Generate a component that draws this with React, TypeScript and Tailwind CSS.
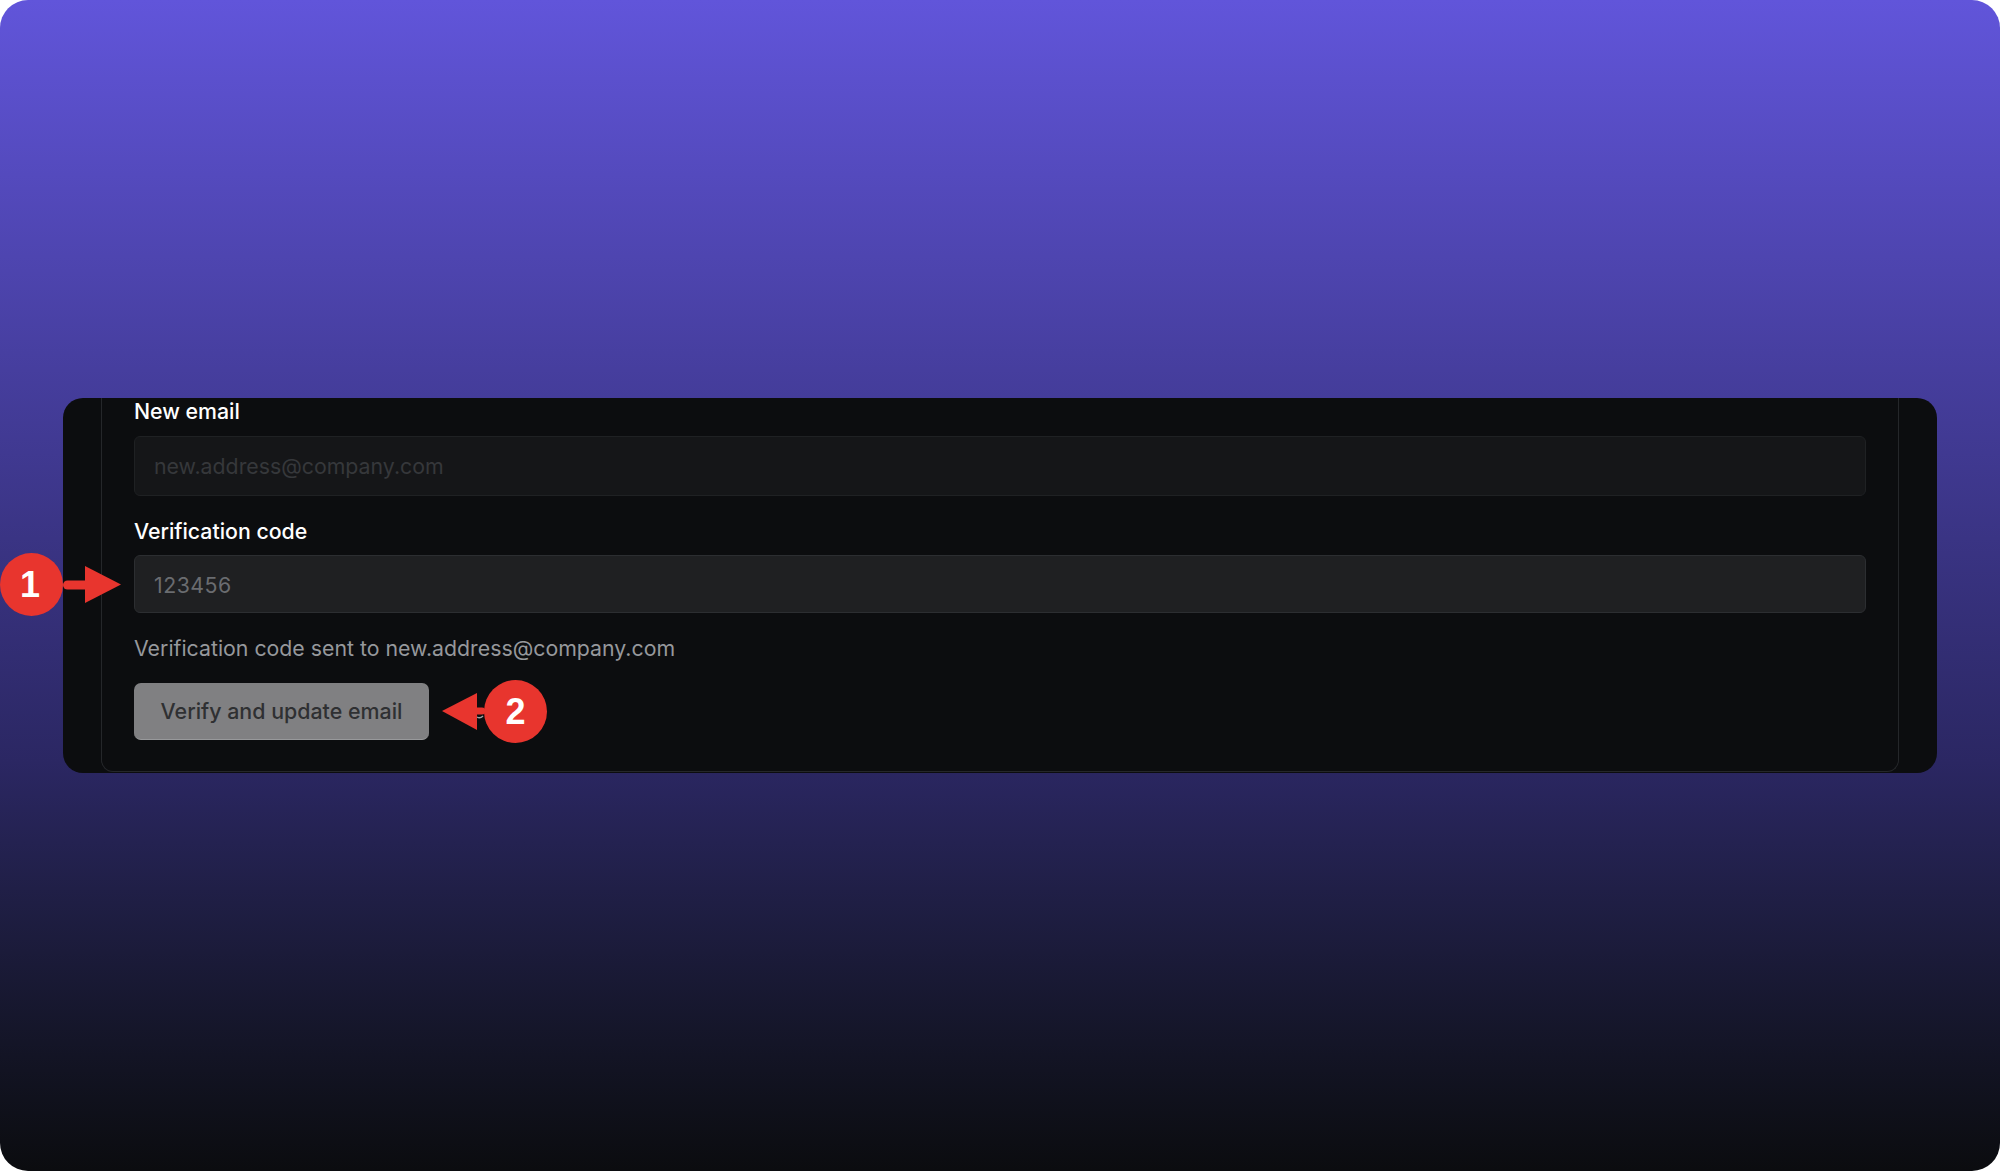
import React from "react";

function Callout({ n, className }: { n: number; className: string }) {
  return (
    <div
      className={
        "absolute w-[63px] h-[63px] rounded-full bg-[#e8352e] flex items-center justify-center text-white text-[36px] font-bold leading-none font-['Liberation_Sans',sans-serif] " +
        className
      }
    >
      {n}
    </div>
  );
}

export default function App() {
  return (
    <div className="bg-white font-['Inter',sans-serif]">
      <div className="relative h-[1171px] rounded-[28px] overflow-hidden bg-gradient-to-b from-[#6155da] via-[#2b2763] via-[65%] to-[#0b0c0f] flex items-center px-[63px]">
        <div className="w-full h-[375px] rounded-[20px] bg-[#0c0d0f] overflow-hidden px-[38px]">
          <div className="h-[374px] rounded-b-[12px] border-x border-b border-[#25272a] px-[32px] flex flex-col">
            <label className="text-white text-[21.3px] font-medium leading-[26px]">
              New email
            </label>
            <input
              disabled
              placeholder="new.address@company.com"
              className="mt-[12px] h-[60px] rounded-[6px] border border-[#1f2123] bg-[#151618] px-[19px] text-[21.3px] placeholder:text-[#36383b] outline-none"
            />
            <label className="mt-[21px] text-white text-[21.3px] font-medium leading-[28px]">
              Verification code
            </label>
            <input
              placeholder="123456"
              className="mt-[10px] h-[58px] rounded-[6px] border border-[#2c2e31] bg-[#1f2022] px-[19px] pt-[2px] text-[21.3px] tracking-[0.5px] placeholder:text-[#6a6c70] outline-none"
            />
            <p className="mt-[21px] text-[21.3px] leading-[28px] text-[#96989c]">
              Verification code sent to new.address@company.com
            </p>
            <button className="mt-[21px] w-[295px] h-[57px] rounded-[7px] bg-[#808082] border-b border-[#98999b] text-[#2f3032] text-[21.4px] font-medium">
              Verify and update email
            </button>
          </div>
        </div>

        {/* annotation 1 */}
        <Callout n={1} className="left-0 top-[553px] pr-[3px]" />
        <svg className="absolute left-[62px] top-[560px]" width="62" height="50" viewBox="0 0 62 50">
          <path d="M5.5 25H26" stroke="#e8352e" strokeWidth="9" strokeLinecap="round" />
          <path d="M23 6L59 24.500L23 43Z" fill="#e8352e" />
        </svg>

        {/* annotation 2 */}
        <svg className="absolute left-[440px] top-[686px]" width="50" height="50" viewBox="0 0 50 50">
          <path d="M37 31Q40 33 43 30" stroke="#a0a1a3" strokeWidth="1.5" fill="none" />
          <path d="M34 25H42" stroke="#e8352e" strokeWidth="7" strokeLinecap="round" />
          <path d="M37 7L2 25L37 44Z" fill="#e8352e" />
        </svg>
        <Callout n={2} className="left-[484px] top-[680px]" />
      </div>
    </div>
  );
}
